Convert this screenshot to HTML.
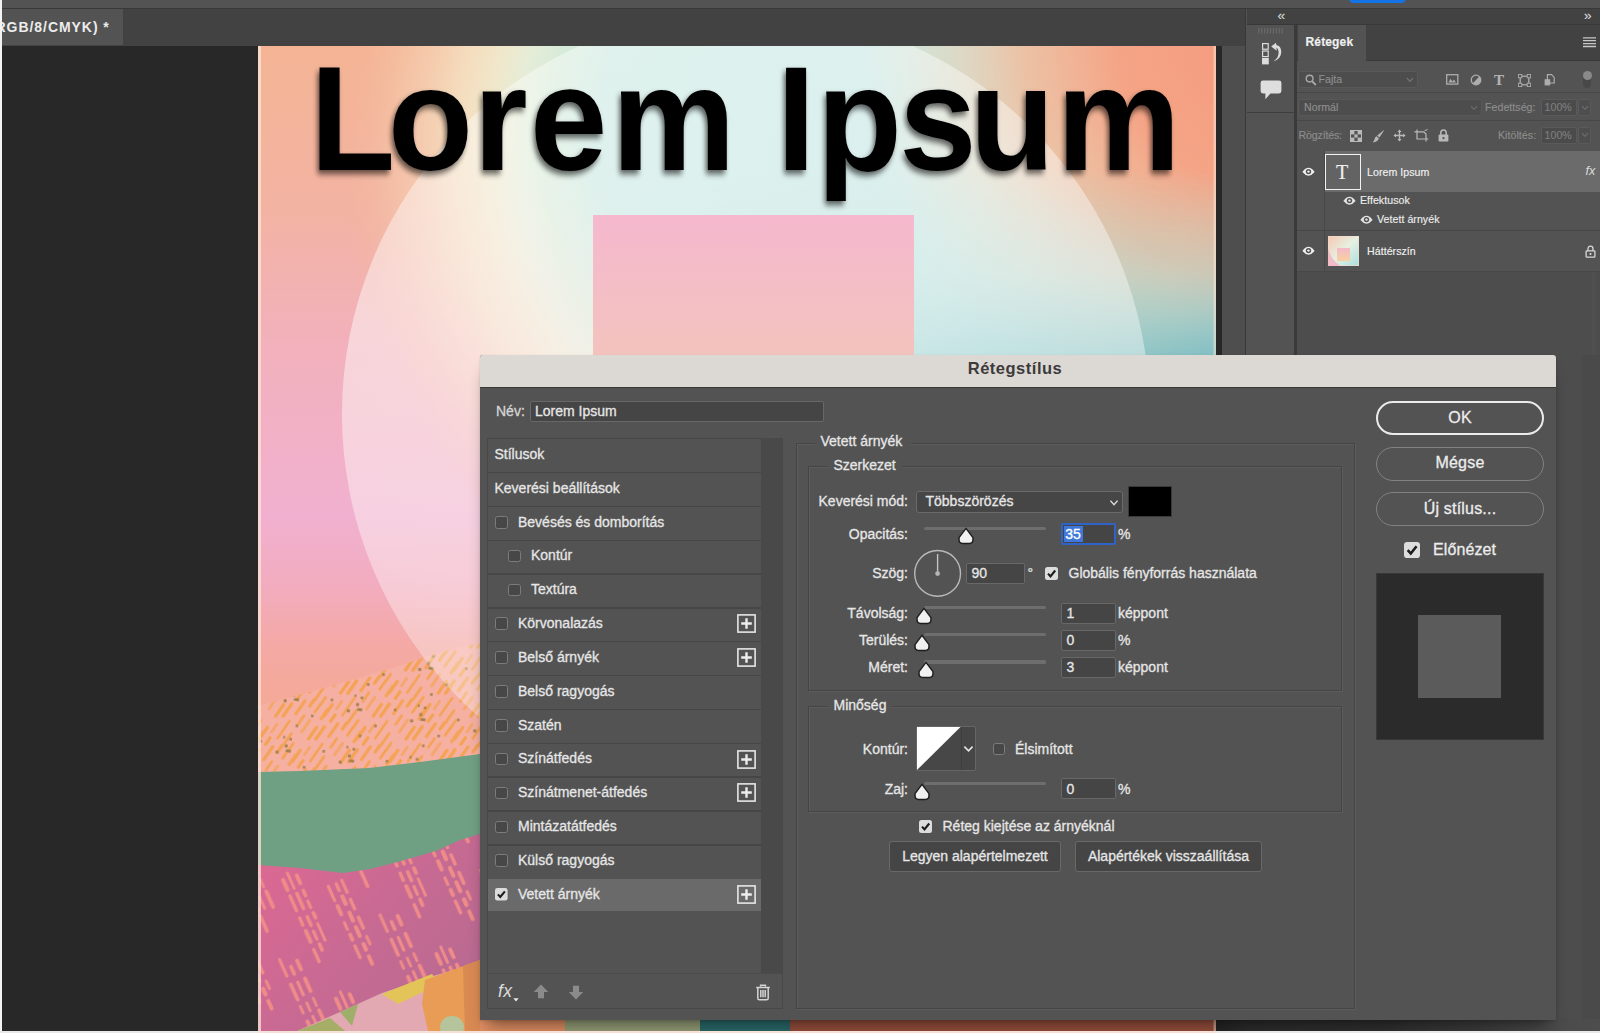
<!DOCTYPE html>
<html lang="hu">
<head>
<meta charset="utf-8">
<title>Rétegstílus</title>
<style>
html,body{margin:0;padding:0;background:#535353;}
body{width:1600px;height:1033px;overflow:hidden;font-family:"Liberation Sans",sans-serif;}
#root{position:relative;width:1600px;height:1033px;overflow:hidden;background:#535353;}
#root div,#root span,#root svg{position:absolute;box-sizing:border-box;}
.t{white-space:nowrap;color:#e6e6e6;font-size:14px;line-height:16px;letter-spacing:0;-webkit-text-stroke:0.3px currentColor;}
.r{text-align:right;}
.p{white-space:nowrap;font-size:10.6px;line-height:14px;color:#ddd;letter-spacing:0.05px;-webkit-text-stroke:0.15px currentColor;}
/* ---- app chrome ---- */
#topbar{left:0;top:0;width:1600px;height:8px;background:#535353;}
#topline{left:0;top:8px;width:1600px;height:1px;background:#383838;}
#tabbar{left:0;top:9px;width:1246px;height:37px;background:#424242;}
#doctab{left:0;top:9px;width:123px;height:36px;background:#535353;}
#doctabtxt{left:-4.5px;top:19.3px;font-weight:bold;font-size:14px;color:#ececec;letter-spacing:0.95px;-webkit-text-stroke:0;}
#work{left:0;top:46px;width:1222px;height:987px;background:#282828;}
#leftedge{left:0;top:0;width:2.2px;height:1033px;background:#f4f4f4;}
#botedge{left:0;top:1031px;width:1600px;height:2px;background:#e9e9e9;}
#vscroll{left:1222px;top:46px;width:23px;height:987px;background:#4e4e4e;}
#vline1{left:1245px;top:9px;width:1px;height:1024px;background:#383838;}
#dock{left:1246px;top:9px;width:49px;height:1024px;background:#535353;}
#vline2{left:1294.4px;top:9px;width:2.2px;height:1024px;background:#383838;}
#panel{left:1296.6px;top:9px;width:304px;height:1024px;background:#4d4d4d;}
</style>
</head>
<body>
<div id="root">
  <div id="topbar"></div>
  <div id="topline"></div>
  <div id="tabbar"></div>
  <div id="doctab"></div>
  <div id="doctabtxt" class="t">RGB/8/CMYK) *</div>
  <div id="work"></div>
  <!--CANVAS-->
  <svg id="cv" style="left:258px;top:46px" width="958" height="985" viewBox="258 46 958 985">
    <defs>
      <linearGradient id="gL" x1="0" y1="46" x2="0" y2="1031" gradientUnits="userSpaceOnUse">
        <stop offset="0" stop-color="#f4b494"/>
        <stop offset="0.16" stop-color="#f3b3a2"/>
        <stop offset="0.30" stop-color="#f2b1bb"/>
        <stop offset="0.48" stop-color="#f1b0cf"/>
        <stop offset="0.55" stop-color="#f2acbe"/>
        <stop offset="0.61" stop-color="#f4a9a4"/>
        <stop offset="0.67" stop-color="#f5a997"/>
        <stop offset="1" stop-color="#f5a997"/>
      </linearGradient>
      <radialGradient id="gC" cx="860" cy="150" r="520" gradientUnits="userSpaceOnUse">
        <stop offset="0" stop-color="#c2e6e3"/>
        <stop offset="0.50" stop-color="#c8e8e1"/>
        <stop offset="0.60" stop-color="#d6ebd9"/>
        <stop offset="0.66" stop-color="#e5eed9" stop-opacity="0.98"/>
        <stop offset="0.72" stop-color="#f1e9cc" stop-opacity="0.95"/>
        <stop offset="0.78" stop-color="#f5e1c2" stop-opacity="0.88"/>
        <stop offset="0.88" stop-color="#f6d0b2" stop-opacity="0.55"/>
        <stop offset="1" stop-color="#f4b494" stop-opacity="0"/>
      </radialGradient>
      <radialGradient id="gTR" cx="1260" cy="40" r="475" gradientUnits="userSpaceOnUse">
        <stop offset="0" stop-color="#f59a7e"/>
        <stop offset="0.3" stop-color="#f5a486"/>
        <stop offset="0.5" stop-color="#f5b896" stop-opacity="0.8"/>
        <stop offset="0.68" stop-color="#f2d0b0" stop-opacity="0.4"/>
        <stop offset="0.85" stop-color="#f0dcc0" stop-opacity="0"/>
        <stop offset="1" stop-color="#f0dcc0" stop-opacity="0"/>
      </radialGradient>
      <linearGradient id="gTeal" x1="0" y1="170" x2="0" y2="375" gradientUnits="userSpaceOnUse">
        <stop offset="0" stop-color="#9ccfd0" stop-opacity="0"/>
        <stop offset="0.5" stop-color="#9ccfd0" stop-opacity="0.45"/>
        <stop offset="0.8" stop-color="#84c3c8" stop-opacity="0.85"/>
        <stop offset="1" stop-color="#6fb7c0" stop-opacity="1"/>
      </linearGradient>
      <linearGradient id="gTealM" x1="600" y1="0" x2="1216" y2="0" gradientUnits="userSpaceOnUse">
        <stop offset="0" stop-color="#fff" stop-opacity="0"/>
        <stop offset="0.5" stop-color="#fff" stop-opacity="0.45"/>
        <stop offset="1" stop-color="#fff" stop-opacity="1"/>
      </linearGradient>
      <radialGradient id="gPW" cx="470" cy="420" r="270" gradientUnits="userSpaceOnUse">
        <stop offset="0" stop-color="#fbe3e8" stop-opacity="0.3"/>
        <stop offset="0.55" stop-color="#fbe6e6" stop-opacity="0.22"/>
        <stop offset="1" stop-color="#fbe6e6" stop-opacity="0"/>
      </radialGradient>
      <clipPath id="cCirc"><circle cx="746" cy="414" r="404"/></clipPath>
      <mask id="mTeal"><rect x="258" y="46" width="958" height="985" fill="url(#gTealM)"/></mask>
      <linearGradient id="gPink" x1="0" y1="215" x2="0" y2="420" gradientUnits="userSpaceOnUse">
        <stop offset="0" stop-color="#f5b8ce"/>
        <stop offset="1" stop-color="#f2c8b6"/>
      </linearGradient>
      <linearGradient id="gCirc" x1="0" y1="10" x2="0" y2="818" gradientUnits="userSpaceOnUse">
        <stop offset="0" stop-color="#fff" stop-opacity="0.42"/>
        <stop offset="0.4" stop-color="#fff" stop-opacity="0.4"/>
        <stop offset="0.6" stop-color="#fff" stop-opacity="0.34"/>
        <stop offset="0.8" stop-color="#fff" stop-opacity="0.3"/>
        <stop offset="1" stop-color="#fff" stop-opacity="0.3"/>
      </linearGradient>
      <linearGradient id="gMag" x1="258" y1="840" x2="480" y2="1031" gradientUnits="userSpaceOnUse">
        <stop offset="0" stop-color="#de6893"/>
        <stop offset="0.5" stop-color="#c76a93"/>
        <stop offset="1" stop-color="#b46a90"/>
      </linearGradient>
      <pattern id="pHatch" width="40" height="56" patternUnits="userSpaceOnUse" patternTransform="rotate(35)">
        <rect x="2.8" y="-2.1" width="3.3" height="13.0" rx="1.6" fill="#f4a356" opacity="1"/>
        <rect x="0.9" y="15.5" width="3.5" height="18.6" rx="1.8" fill="#f4a356" opacity="1"/>
        <rect x="0.9" y="41.1" width="2.7" height="11.9" rx="1.3" fill="#f4a356" opacity="0.75"/>
        <rect x="10.2" y="5.4" width="3.2" height="19.2" rx="1.6" fill="#f4a356" opacity="1"/>
        <rect x="9.5" y="31.3" width="2.6" height="23.7" rx="1.3" fill="#f4a356" opacity="1"/>
        <rect x="17.0" y="-4.6" width="3.4" height="15.0" rx="1.7" fill="#f4a356" opacity="1"/>
        <rect x="18.2" y="18.4" width="2.7" height="13.4" rx="1.3" fill="#f4a356" opacity="1"/>
        <rect x="17.9" y="40.2" width="3.1" height="17.5" rx="1.6" fill="#f4a356" opacity="0.9"/>
        <rect x="17.9" y="-15.8" width="3.1" height="17.5" rx="1.6" fill="#f4a356" opacity="0.9"/>
        <rect x="25.0" y="-1.7" width="2.8" height="14.2" rx="1.4" fill="#f4a356" opacity="1"/>
        <rect x="25.5" y="18.7" width="2.9" height="17.4" rx="1.5" fill="#f4a356" opacity="0.75"/>
        <rect x="25.2" y="47.0" width="3.0" height="12.5" rx="1.5" fill="#f4a356" opacity="0.9"/>
        <rect x="25.2" y="-9.0" width="3.0" height="12.5" rx="1.5" fill="#f4a356" opacity="0.9"/>
        <rect x="33.6" y="-5.5" width="3.4" height="19.7" rx="1.7" fill="#f4a356" opacity="0.9"/>
        <rect x="34.8" y="20.6" width="3.4" height="17.5" rx="1.7" fill="#f4a356" opacity="1"/>
        <rect x="34.6" y="48.7" width="3.3" height="17.2" rx="1.6" fill="#f4a356" opacity="1"/>
        <rect x="34.6" y="-7.3" width="3.3" height="17.2" rx="1.6" fill="#f4a356" opacity="1"/>
      </pattern>
      <pattern id="pDots" width="64" height="52" patternUnits="userSpaceOnUse" patternTransform="rotate(9)">
        <rect x="35.1" y="33.0" width="2.6" height="2.6" fill="#a8824e"/>
        <rect x="17.8" y="19.1" width="3" height="3" fill="#a8824e"/>
        <rect x="21.5" y="45.2" width="2.6" height="2.6" fill="#a8824e"/>
        <rect x="10.9" y="6.5" width="2.2" height="2.2" fill="#a8824e"/>
        <rect x="13.9" y="14.5" width="3" height="3" fill="#a8824e"/>
        <rect x="15.6" y="19.4" width="2.6" height="2.6" fill="#a8824e"/>
        <rect x="5.8" y="22.1" width="3" height="3" fill="#a8824e"/>
        <rect x="17.4" y="7.4" width="2.6" height="2.6" fill="#a8824e"/>
        <rect x="52.0" y="14.1" width="2.6" height="2.6" fill="#a8824e"/>
      </pattern>
      <pattern id="pRain" width="110" height="130" patternUnits="userSpaceOnUse" patternTransform="rotate(-24)">
        <rect x="8.7" y="7.1" width="4.0" height="14.9" rx="2.0" fill="#ef8b88"/>
        <rect x="8.7" y="-122.9" width="4.0" height="14.9" rx="2.0" fill="#ef8b88"/>
        <rect x="8.7" y="137.1" width="4.0" height="14.9" rx="2.0" fill="#ef8b88"/>
        <rect x="8.7" y="24.8" width="3.5" height="19.5" rx="1.7" fill="#ef8b88"/>
        <rect x="8.7" y="-105.2" width="3.5" height="19.5" rx="1.7" fill="#ef8b88"/>
        <rect x="8.7" y="154.8" width="3.5" height="19.5" rx="1.7" fill="#ef8b88"/>
        <rect x="8.7" y="48.7" width="3.4" height="11.4" rx="1.7" fill="#ef8b88"/>
        <rect x="8.7" y="-81.3" width="3.4" height="11.4" rx="1.7" fill="#ef8b88"/>
        <rect x="8.7" y="178.7" width="3.4" height="11.4" rx="1.7" fill="#ef8b88"/>
        <rect x="8.7" y="62.7" width="4.0" height="16.0" rx="2.0" fill="#ef8b88"/>
        <rect x="8.7" y="-67.3" width="4.0" height="16.0" rx="2.0" fill="#ef8b88"/>
        <rect x="8.7" y="192.7" width="4.0" height="16.0" rx="2.0" fill="#ef8b88"/>
        <rect x="8.7" y="83.2" width="3.4" height="16.7" rx="1.7" fill="#ef8b88"/>
        <rect x="8.7" y="-46.8" width="3.4" height="16.7" rx="1.7" fill="#ef8b88"/>
        <rect x="8.7" y="213.2" width="3.4" height="16.7" rx="1.7" fill="#ef8b88"/>
        <rect x="16.0" y="3.0" width="2.9" height="19.8" rx="1.4" fill="#ef8b88"/>
        <rect x="16.0" y="-127.0" width="2.9" height="19.8" rx="1.4" fill="#ef8b88"/>
        <rect x="16.0" y="133.0" width="2.9" height="19.8" rx="1.4" fill="#ef8b88"/>
        <rect x="16.0" y="25.0" width="3.6" height="20.4" rx="1.8" fill="#ef8b88"/>
        <rect x="16.0" y="-105.0" width="3.6" height="20.4" rx="1.8" fill="#ef8b88"/>
        <rect x="16.0" y="155.0" width="3.6" height="20.4" rx="1.8" fill="#ef8b88"/>
        <rect x="16.0" y="50.5" width="3.6" height="13.2" rx="1.8" fill="#ef8b88"/>
        <rect x="16.0" y="-79.5" width="3.6" height="13.2" rx="1.8" fill="#ef8b88"/>
        <rect x="16.0" y="180.5" width="3.6" height="13.2" rx="1.8" fill="#ef8b88"/>
        <rect x="16.0" y="66.5" width="3.2" height="12.0" rx="1.6" fill="#ef8b88"/>
        <rect x="16.0" y="-63.5" width="3.2" height="12.0" rx="1.6" fill="#ef8b88"/>
        <rect x="16.0" y="196.5" width="3.2" height="12.0" rx="1.6" fill="#ef8b88"/>
        <rect x="16.0" y="80.6" width="3.7" height="10.1" rx="1.9" fill="#ef8b88"/>
        <rect x="16.0" y="-49.4" width="3.7" height="10.1" rx="1.9" fill="#ef8b88"/>
        <rect x="16.0" y="210.6" width="3.7" height="10.1" rx="1.9" fill="#ef8b88"/>
        <rect x="23.1" y="8.6" width="3.9" height="12.3" rx="1.9" fill="#ef8b88"/>
        <rect x="23.1" y="-121.4" width="3.9" height="12.3" rx="1.9" fill="#ef8b88"/>
        <rect x="23.1" y="138.6" width="3.9" height="12.3" rx="1.9" fill="#ef8b88"/>
        <rect x="23.1" y="25.0" width="3.6" height="9.4" rx="1.8" fill="#ef8b88"/>
        <rect x="23.1" y="-105.0" width="3.6" height="9.4" rx="1.8" fill="#ef8b88"/>
        <rect x="23.1" y="155.0" width="3.6" height="9.4" rx="1.8" fill="#ef8b88"/>
        <rect x="23.1" y="36.8" width="3.2" height="10.4" rx="1.6" fill="#ef8b88"/>
        <rect x="23.1" y="-93.2" width="3.2" height="10.4" rx="1.6" fill="#ef8b88"/>
        <rect x="23.1" y="166.8" width="3.2" height="10.4" rx="1.6" fill="#ef8b88"/>
        <rect x="23.1" y="49.5" width="3.8" height="9.2" rx="1.9" fill="#ef8b88"/>
        <rect x="23.1" y="-80.5" width="3.8" height="9.2" rx="1.9" fill="#ef8b88"/>
        <rect x="23.1" y="179.5" width="3.8" height="9.2" rx="1.9" fill="#ef8b88"/>
        <rect x="23.1" y="61.5" width="2.9" height="21.1" rx="1.4" fill="#ef8b88"/>
        <rect x="23.1" y="-68.5" width="2.9" height="21.1" rx="1.4" fill="#ef8b88"/>
        <rect x="23.1" y="191.5" width="2.9" height="21.1" rx="1.4" fill="#ef8b88"/>
        <rect x="47.8" y="31.5" width="3.2" height="19.1" rx="1.6" fill="#ef8b88"/>
        <rect x="47.8" y="-98.5" width="3.2" height="19.1" rx="1.6" fill="#ef8b88"/>
        <rect x="47.8" y="161.5" width="3.2" height="19.1" rx="1.6" fill="#ef8b88"/>
        <rect x="47.8" y="52.9" width="4.1" height="13.3" rx="2.1" fill="#ef8b88"/>
        <rect x="47.8" y="-77.1" width="4.1" height="13.3" rx="2.1" fill="#ef8b88"/>
        <rect x="47.8" y="182.9" width="4.1" height="13.3" rx="2.1" fill="#ef8b88"/>
        <rect x="47.8" y="71.3" width="3.1" height="10.5" rx="1.6" fill="#ef8b88"/>
        <rect x="47.8" y="-58.7" width="3.1" height="10.5" rx="1.6" fill="#ef8b88"/>
        <rect x="47.8" y="201.3" width="3.1" height="10.5" rx="1.6" fill="#ef8b88"/>
        <rect x="47.8" y="84.2" width="3.9" height="9.8" rx="2.0" fill="#ef8b88"/>
        <rect x="47.8" y="-45.8" width="3.9" height="9.8" rx="2.0" fill="#ef8b88"/>
        <rect x="47.8" y="214.2" width="3.9" height="9.8" rx="2.0" fill="#ef8b88"/>
        <rect x="47.8" y="96.7" width="3.4" height="16.3" rx="1.7" fill="#ef8b88"/>
        <rect x="47.8" y="-33.3" width="3.4" height="16.3" rx="1.7" fill="#ef8b88"/>
        <rect x="47.8" y="226.7" width="3.4" height="16.3" rx="1.7" fill="#ef8b88"/>
        <rect x="56.0" y="32.6" width="3.4" height="10.5" rx="1.7" fill="#ef8b88"/>
        <rect x="56.0" y="-97.4" width="3.4" height="10.5" rx="1.7" fill="#ef8b88"/>
        <rect x="56.0" y="162.6" width="3.4" height="10.5" rx="1.7" fill="#ef8b88"/>
        <rect x="56.0" y="46.0" width="4.2" height="12.5" rx="2.1" fill="#ef8b88"/>
        <rect x="56.0" y="-84.0" width="4.2" height="12.5" rx="2.1" fill="#ef8b88"/>
        <rect x="56.0" y="176.0" width="4.2" height="12.5" rx="2.1" fill="#ef8b88"/>
        <rect x="56.0" y="63.7" width="4.0" height="13.0" rx="2.0" fill="#ef8b88"/>
        <rect x="56.0" y="-66.3" width="4.0" height="13.0" rx="2.0" fill="#ef8b88"/>
        <rect x="56.0" y="193.7" width="4.0" height="13.0" rx="2.0" fill="#ef8b88"/>
        <rect x="56.0" y="79.5" width="4.0" height="14.1" rx="2.0" fill="#ef8b88"/>
        <rect x="56.0" y="-50.5" width="4.0" height="14.1" rx="2.0" fill="#ef8b88"/>
        <rect x="56.0" y="209.5" width="4.0" height="14.1" rx="2.0" fill="#ef8b88"/>
        <rect x="56.0" y="98.2" width="4.2" height="10.3" rx="2.1" fill="#ef8b88"/>
        <rect x="56.0" y="-31.8" width="4.2" height="10.3" rx="2.1" fill="#ef8b88"/>
        <rect x="56.0" y="228.2" width="4.2" height="10.3" rx="2.1" fill="#ef8b88"/>
        <rect x="56.0" y="111.4" width="3.9" height="12.4" rx="1.9" fill="#ef8b88"/>
        <rect x="56.0" y="-18.6" width="3.9" height="12.4" rx="1.9" fill="#ef8b88"/>
        <rect x="56.0" y="241.4" width="3.9" height="12.4" rx="1.9" fill="#ef8b88"/>
        <rect x="62.6" y="31.5" width="3.1" height="16.6" rx="1.6" fill="#ef8b88"/>
        <rect x="62.6" y="-98.5" width="3.1" height="16.6" rx="1.6" fill="#ef8b88"/>
        <rect x="62.6" y="161.5" width="3.1" height="16.6" rx="1.6" fill="#ef8b88"/>
        <rect x="62.6" y="52.4" width="3.4" height="13.8" rx="1.7" fill="#ef8b88"/>
        <rect x="62.6" y="-77.6" width="3.4" height="13.8" rx="1.7" fill="#ef8b88"/>
        <rect x="62.6" y="182.4" width="3.4" height="13.8" rx="1.7" fill="#ef8b88"/>
        <rect x="62.6" y="72.1" width="3.6" height="15.3" rx="1.8" fill="#ef8b88"/>
        <rect x="62.6" y="-57.9" width="3.6" height="15.3" rx="1.8" fill="#ef8b88"/>
        <rect x="62.6" y="202.1" width="3.6" height="15.3" rx="1.8" fill="#ef8b88"/>
        <rect x="62.6" y="92.9" width="3.0" height="11.4" rx="1.5" fill="#ef8b88"/>
        <rect x="62.6" y="-37.1" width="3.0" height="11.4" rx="1.5" fill="#ef8b88"/>
        <rect x="62.6" y="222.9" width="3.0" height="11.4" rx="1.5" fill="#ef8b88"/>
        <rect x="83.5" y="78.8" width="3.1" height="21.2" rx="1.5" fill="#ef8b88"/>
        <rect x="83.5" y="-51.2" width="3.1" height="21.2" rx="1.5" fill="#ef8b88"/>
        <rect x="83.5" y="208.8" width="3.1" height="21.2" rx="1.5" fill="#ef8b88"/>
        <rect x="83.5" y="105.8" width="3.6" height="20.5" rx="1.8" fill="#ef8b88"/>
        <rect x="83.5" y="-24.2" width="3.6" height="20.5" rx="1.8" fill="#ef8b88"/>
        <rect x="83.5" y="235.8" width="3.6" height="20.5" rx="1.8" fill="#ef8b88"/>
        <rect x="83.5" y="130.0" width="2.9" height="10.3" rx="1.4" fill="#ef8b88"/>
        <rect x="83.5" y="-0.0" width="2.9" height="10.3" rx="1.4" fill="#ef8b88"/>
        <rect x="83.5" y="260.0" width="2.9" height="10.3" rx="1.4" fill="#ef8b88"/>
        <rect x="83.5" y="146.2" width="3.8" height="12.1" rx="1.9" fill="#ef8b88"/>
        <rect x="83.5" y="16.2" width="3.8" height="12.1" rx="1.9" fill="#ef8b88"/>
        <rect x="83.5" y="276.2" width="3.8" height="12.1" rx="1.9" fill="#ef8b88"/>
        <rect x="83.5" y="161.3" width="3.6" height="19.7" rx="1.8" fill="#ef8b88"/>
        <rect x="83.5" y="31.3" width="3.6" height="19.7" rx="1.8" fill="#ef8b88"/>
        <rect x="83.5" y="291.3" width="3.6" height="19.7" rx="1.8" fill="#ef8b88"/>
        <rect x="90.9" y="89.4" width="3.6" height="12.0" rx="1.8" fill="#ef8b88"/>
        <rect x="90.9" y="-40.6" width="3.6" height="12.0" rx="1.8" fill="#ef8b88"/>
        <rect x="90.9" y="219.4" width="3.6" height="12.0" rx="1.8" fill="#ef8b88"/>
        <rect x="90.9" y="106.8" width="3.2" height="17.0" rx="1.6" fill="#ef8b88"/>
        <rect x="90.9" y="-23.2" width="3.2" height="17.0" rx="1.6" fill="#ef8b88"/>
        <rect x="90.9" y="236.8" width="3.2" height="17.0" rx="1.6" fill="#ef8b88"/>
        <rect x="90.9" y="129.4" width="2.8" height="11.7" rx="1.4" fill="#ef8b88"/>
        <rect x="90.9" y="-0.6" width="2.8" height="11.7" rx="1.4" fill="#ef8b88"/>
        <rect x="90.9" y="259.4" width="2.8" height="11.7" rx="1.4" fill="#ef8b88"/>
        <rect x="90.9" y="144.2" width="2.9" height="14.8" rx="1.4" fill="#ef8b88"/>
        <rect x="90.9" y="14.2" width="2.9" height="14.8" rx="1.4" fill="#ef8b88"/>
        <rect x="90.9" y="274.2" width="2.9" height="14.8" rx="1.4" fill="#ef8b88"/>
        <rect x="98.7" y="86.4" width="4.0" height="13.7" rx="2.0" fill="#ef8b88"/>
        <rect x="98.7" y="-43.6" width="4.0" height="13.7" rx="2.0" fill="#ef8b88"/>
        <rect x="98.7" y="216.4" width="4.0" height="13.7" rx="2.0" fill="#ef8b88"/>
        <rect x="98.7" y="106.1" width="3.8" height="17.5" rx="1.9" fill="#ef8b88"/>
        <rect x="98.7" y="-23.9" width="3.8" height="17.5" rx="1.9" fill="#ef8b88"/>
        <rect x="98.7" y="236.1" width="3.8" height="17.5" rx="1.9" fill="#ef8b88"/>
        <rect x="98.7" y="128.0" width="2.8" height="10.8" rx="1.4" fill="#ef8b88"/>
        <rect x="98.7" y="-2.0" width="2.8" height="10.8" rx="1.4" fill="#ef8b88"/>
        <rect x="98.7" y="258.0" width="2.8" height="10.8" rx="1.4" fill="#ef8b88"/>
        <rect x="98.7" y="140.8" width="3.8" height="20.8" rx="1.9" fill="#ef8b88"/>
        <rect x="98.7" y="10.8" width="3.8" height="20.8" rx="1.9" fill="#ef8b88"/>
        <rect x="98.7" y="270.8" width="3.8" height="20.8" rx="1.9" fill="#ef8b88"/>
      </pattern>
      <filter id="fBlur" x="-5%" y="-5%" width="110%" height="110%"><feGaussianBlur stdDeviation="0.6"/></filter>
      <filter id="fDrop" x="-3%" y="-15%" width="106%" height="140%"><feGaussianBlur in="SourceAlpha" stdDeviation="3"/><feOffset dx="-2.5" dy="3.5"/><feComponentTransfer><feFuncA type="linear" slope="0.62"/></feComponentTransfer><feMerge><feMergeNode/><feMergeNode in="SourceGraphic"/></feMerge></filter>
    </defs>
    <rect x="258" y="46" width="958" height="985" fill="url(#gL)"/>
    <rect x="258" y="46" width="958" height="700" fill="url(#gC)"/>
    <rect x="258" y="46" width="958" height="500" fill="url(#gTR)"/>
    <rect x="258" y="46" width="958" height="700" fill="url(#gTeal)" mask="url(#mTeal)"/>
    <!-- landscape -->
    <g filter="url(#fBlur)">
      <path id="hb" d="M258,706 L262,705 L324,688 L399,666 L440,652 L480,643 L1216,560 L1216,800 L258,800 Z" fill="#f6b4a6" opacity="0.7"/>
      <path d="M258,706 L262,705 L324,688 L399,666 L440,652 L480,643 L1216,560 L1216,800 L258,800 Z" fill="url(#pHatch)"/>
      <path d="M258,706 L262,705 L324,688 L399,666 L440,652 L480,643 L1216,560 L1216,800 L258,800 Z" fill="url(#pDots)"/>
    </g>
    <circle cx="746" cy="414" r="404" fill="url(#gCirc)"/>
    <rect x="258" y="46" width="500" height="700" fill="url(#gPW)" clip-path="url(#cCirc)"/>
    <rect x="593" y="215" width="321" height="300" fill="url(#gPink)"/>
    <g filter="url(#fBlur)">
      <path d="M258,772 L300,771 L369,768 L420,762 L480,754 L1216,700 L1216,900 L258,900 Z" fill="#6fa084"/>
      <path d="M258,865 L300,868 L343,873 L370,869 L394,863 L436,851 L460,840 L480,834 L1216,800 L1216,1031 L258,1031 Z" fill="url(#gMag)"/>
      <path d="M258,865 L300,868 L343,873 L370,869 L394,863 L436,851 L460,840 L480,834 L1216,800 L1216,1031 L258,1031 Z" fill="url(#pRain)"/>
      <path d="M297,1031 L340,1012 L382,993 L430,977 L480,962 L1216,962 L1216,1031 Z" fill="#e3a9b2"/>
      <path d="M382,994 L432,974 L440,984 L398,1004 Z" fill="#e3c458"/>
      <path d="M425,980 L480,960 L480,1031 L428,1031 L422,1004 Z" fill="#e89c55"/>
      <path d="M463,966 L480,960 L480,1031 L465,1031 Z" fill="#d98a52"/>
      <ellipse cx="452" cy="1027" rx="12" ry="11" fill="#b5c49a"/>
      <path d="M340,1012 L358,1004 L352,1026 Z" fill="#9fae68"/>
      <path d="M297,1031 L330,1018 L345,1031 Z" fill="#a6ad66"/>
      <rect x="480" y="1010" width="90" height="21" fill="#e08e62"/>
      <rect x="565" y="1010" width="140" height="21" fill="#969f78"/>
      <rect x="700" y="1010" width="92" height="21" fill="#2b6b6b"/>
      <rect x="790" y="1010" width="426" height="21" fill="#97503c"/>
    </g>
    <rect x="258" y="46" width="3" height="985" fill="#fbe6d8" opacity="0.75"/>
    <rect x="1213.5" y="46" width="2.5" height="985" fill="#fbe6d8" opacity="0.5"/>
    <!-- text -->
    <text id="lorem" transform="scale(0.935 1)" x="331.7 415.0 506.3 566.8 654.4 796.8 830.8 873.8 961.7 1037.1 1130.1" y="170.0" font-family="'Liberation Sans',sans-serif" font-weight="bold" font-size="148.8" fill="#050102" filter="url(#fDrop)">Lorem Ipsum</text>
  </svg>
  <!--/CANVAS-->
  <div id="vscroll"></div>
  <div id="vline1"></div>
  <div id="dock"></div>
  <div id="vline2"></div>
  <div id="panel"></div>
  <!--PANELS-->
  <div style="left:1349px;top:-6px;width:57px;height:8.6px;background:#1473e6;border-radius:5px;"></div>
  <div style="left:1246.5px;top:9px;width:353.5px;height:15px;background:#424242;"></div>
  <div style="left:1246.5px;top:24px;width:353.5px;height:1px;background:#383838;"></div>
  <div class="p" style="left:1277.5px;top:8.5px;font-size:13px;line-height:14px;color:#d8d8d8;letter-spacing:-1px;">&lsaquo;&lsaquo;</div>
  <div class="p" style="left:1584px;top:8.5px;font-size:13px;line-height:14px;color:#d8d8d8;letter-spacing:-1px;">&rsaquo;&rsaquo;</div>
  <div style="left:1247px;top:25px;width:48px;height:1008px;background:#535353;"></div>
  <div style="left:1294.4px;top:25px;width:2.2px;height:1008px;background:#3a3a3a;"></div>
  <div style="left:1247px;top:111.5px;width:48px;height:1px;background:#3e3e3e;"></div>
  <svg style="left:1258px;top:28px" width="26" height="6" viewBox="0 0 26 6"><rect x="0.3" y="0" width="1.2" height="5.6" fill="#6a6a6a"/><rect x="3.1999999999999997" y="0" width="1.2" height="5.6" fill="#6a6a6a"/><rect x="6.1" y="0" width="1.2" height="5.6" fill="#6a6a6a"/><rect x="9.0" y="0" width="1.2" height="5.6" fill="#6a6a6a"/><rect x="11.9" y="0" width="1.2" height="5.6" fill="#6a6a6a"/><rect x="14.8" y="0" width="1.2" height="5.6" fill="#6a6a6a"/><rect x="17.7" y="0" width="1.2" height="5.6" fill="#6a6a6a"/><rect x="20.6" y="0" width="1.2" height="5.6" fill="#6a6a6a"/><rect x="23.5" y="0" width="1.2" height="5.6" fill="#6a6a6a"/></svg>
  <svg style="left:1261px;top:42px" width="21" height="23" viewBox="0 0 21 23"><rect x="1.6" y="1.6" width="5.6" height="5.6" fill="none" stroke="#dcdcdc" stroke-width="1.2"/><rect x="1.6" y="9" width="5.6" height="5.6" fill="none" stroke="#dcdcdc" stroke-width="1.2"/><rect x="1" y="16" width="6.8" height="6.4" fill="#dcdcdc"/><path d="M12.4 19.6 Q18.2 15.6 17.6 9.6 Q17.2 6.4 15.4 5.6 L15.8 8.8 L10.2 4.6 L15 0.8 L15.3 3 Q20 3.8 20.3 9.8 Q20.2 16.8 12.4 19.6 Z" fill="#dcdcdc"/></svg>
  <svg style="left:1260px;top:79.5px" width="22" height="20" viewBox="0 0 22 20"><path d="M3 0.6 H19 Q21.4 0.6 21.4 3 V11 Q21.4 13.4 19 13.4 H10.4 L5.4 19.2 V13.4 H3 Q0.6 13.4 0.6 11 V3 Q0.6 0.6 3 0.6 Z" fill="#dedede"/></svg>
  <div style="left:1296.6px;top:25px;width:303.4px;height:34.5px;background:#424242;"></div>
  <div style="left:1296.6px;top:59.5px;width:303.4px;height:1px;background:#3a3a3a;"></div>
  <div style="left:1298px;top:25px;width:67.6px;height:36px;background:#535353;"></div>
  <div class="p" style="left:1305.5px;top:34.5px;font-weight:bold;font-size:12px;line-height:14px;color:#f0f0f0;letter-spacing:0.15px;">Rétegek</div>
  <svg style="left:1582.5px;top:37px" width="13.5" height="10.5" viewBox="0 0 13.5 10.5"><path d="M0 0.8 H13.5 M0 3.7 H13.5 M0 6.6 H13.5 M0 9.5 H13.5" stroke="#c8c8c8" stroke-width="1.3"/></svg>
  <div style="left:1296.6px;top:60.5px;width:303.4px;height:90px;background:#535353;"></div>
  <div style="left:1296.6px;top:91.5px;width:303.4px;height:1px;background:#484848;"></div>
  <div style="left:1296.6px;top:119.5px;width:303.4px;height:1px;background:#484848;"></div>
  <div style="left:1298px;top:71px;width:119.5px;height:17px;background:#4d4d4d;border:1px solid #595959;border-radius:3px;"></div>
  <svg style="left:1304.5px;top:73.5px" width="12" height="12" viewBox="0 0 12 12"><circle cx="4.6" cy="4.6" r="3.4" fill="none" stroke="#a8a8a8" stroke-width="1.4"/><path d="M7 7.2 L10.8 11" stroke="#a8a8a8" stroke-width="1.9"/></svg>
  <div class="p" style="left:1318.5px;top:72.3px;color:#8e8e8e;">Fajta</div>
  <svg style="left:1406px;top:76.5px" width="8" height="6" viewBox="0 0 8 6"><path d="M1 1.2 L4 4.4 L7 1.2" fill="none" stroke="#777" stroke-width="1.2"/></svg>
  <svg style="left:1446px;top:74px" width="12.5" height="11" viewBox="0 0 12.5 11"><rect x="0.7" y="0.7" width="11.1" height="9.4" fill="none" stroke="#adadad" stroke-width="1.3"/><path d="M2.4 8.4 L4.6 4.8 L6.4 7.4 L8 5.6 L10 8.4 Z" fill="#adadad"/></svg>
  <svg style="left:1470px;top:74px" width="12" height="12" viewBox="0 0 12 12"><circle cx="6" cy="6" r="4.8" fill="none" stroke="#adadad" stroke-width="1.3"/><path d="M9.4 2.6 A4.8 4.8 0 0 1 2.6 9.4 Z" fill="#adadad"/></svg>
  <div class="p" style="left:1494px;top:70.5px;font-family:'Liberation Serif',serif;font-weight:bold;font-size:15px;line-height:18px;color:#b4b4b4;">T</div>
  <svg style="left:1518px;top:73.5px" width="13" height="13" viewBox="0 0 13 13"><rect x="2.2" y="2.2" width="8.6" height="8.6" fill="none" stroke="#adadad" stroke-width="1.3"/><rect x="0.4" y="0.4" width="3.4" height="3.4" fill="#535353" stroke="#adadad" stroke-width="0.9"/><rect x="9.2" y="0.4" width="3.4" height="3.4" fill="#535353" stroke="#adadad" stroke-width="0.9"/><rect x="0.4" y="9.2" width="3.4" height="3.4" fill="#535353" stroke="#adadad" stroke-width="0.9"/><rect x="9.2" y="9.2" width="3.4" height="3.4" fill="#535353" stroke="#adadad" stroke-width="0.9"/></svg>
  <svg style="left:1543.5px;top:73.5px" width="11" height="12" viewBox="0 0 11 12"><path d="M3.4 0.7 H7.6 L10.2 3.4 V9 H3.4 Z" fill="none" stroke="#adadad" stroke-width="1.2"/><rect x="0.6" y="5.2" width="5.6" height="6.2" fill="#adadad"/></svg>
  <div style="left:1583px;top:76px;width:8.4px;height:12px;background:#484848;border-radius:4.2px;"></div>
  <div style="left:1582.6px;top:70.5px;width:9px;height:9px;background:#8a8a8a;border-radius:50%;"></div>
  <div style="left:1298px;top:99px;width:184px;height:17px;background:#4d4d4d;border:1px solid #585858;border-radius:3px;"></div>
  <div class="p" style="left:1304px;top:100.3px;color:#8f8f8f;">Normál</div>
  <svg style="left:1470px;top:104.5px" width="8" height="6" viewBox="0 0 8 6"><path d="M1 1.2 L4 4.4 L7 1.2" fill="none" stroke="#6c6c6c" stroke-width="1.2"/></svg>
  <div class="p" style="left:1485px;top:100.3px;color:#8d8d8d;">Fedettség:</div>
  <div style="left:1541px;top:99px;width:36px;height:17px;background:#4b4b4b;border:1px solid #5a5a5a;border-radius:2px;"></div>
  <div class="p" style="left:1544.5px;top:100.3px;color:#7e7e7e;">100%</div>
  <div style="left:1578px;top:99px;width:13px;height:17px;background:#4e4e4e;border:1px solid #5a5a5a;border-radius:2px;"></div>
  <svg style="left:1580.5px;top:104.5px" width="8" height="6" viewBox="0 0 8 6"><path d="M1 1.2 L4 4.4 L7 1.2" fill="none" stroke="#6c6c6c" stroke-width="1.2"/></svg>
  <div class="p" style="left:1298.5px;top:128px;color:#8d8d8d;letter-spacing:-0.15px;">Rögzítés:</div>
  <svg style="left:1349.5px;top:129.5px" width="12" height="12" viewBox="0 0 12 12"><rect x="0.5" y="0.5" width="11" height="11" fill="none" stroke="#b9b9b9" stroke-width="1"/><rect x="1" y="1" width="3.4" height="3.4" fill="#b9b9b9"/><rect x="7.6" y="1" width="3.4" height="3.4" fill="#b9b9b9"/><rect x="4.4" y="4.4" width="3.2" height="3.2" fill="#b9b9b9"/><rect x="1" y="7.6" width="3.4" height="3.4" fill="#b9b9b9"/><rect x="7.6" y="7.6" width="3.4" height="3.4" fill="#b9b9b9"/></svg>
  <svg style="left:1371.5px;top:128.5px" width="13" height="14" viewBox="0 0 13 14"><path d="M12.6 0.4 L7.4 8.4 L5.2 6.6 Z" fill="#b9b9b9"/><path d="M4.4 7.2 L6.8 9.2 Q6.4 12.6 0.6 13.4 Q2.6 11.6 2.8 9.6 Q3 7.8 4.4 7.2 Z" fill="#b9b9b9"/></svg>
  <svg style="left:1392.5px;top:129px" width="13" height="13" viewBox="0 0 13 13"><path d="M6.5 0.4 L8.6 3 H7.2 V5.8 H10 V4.4 L12.6 6.5 L10 8.6 V7.2 H7.2 V10 H8.6 L6.5 12.6 L4.4 10 H5.8 V7.2 H3 V8.6 L0.4 6.5 L3 4.4 V5.8 H5.8 V3 H4.4 Z" fill="#b9b9b9"/></svg>
  <svg style="left:1413.5px;top:129px" width="15" height="13" viewBox="0 0 15 13"><path d="M3 0.4 V10 H14.4 M0.4 2.8 H9.8 L12 5 V12.6" fill="none" stroke="#b9b9b9" stroke-width="1.2"/><path d="M10.6 1.6 L13.6 0.6" stroke="#b9b9b9" stroke-width="1"/></svg>
  <svg style="left:1437.5px;top:128.5px" width="11" height="13" viewBox="0 0 11 13"><path d="M2.8 6 V3.8 Q2.8 1 5.5 1 Q8.2 1 8.2 3.8 V6" fill="none" stroke="#b9b9b9" stroke-width="1.5"/><rect x="0.6" y="5.6" width="9.8" height="7" rx="0.8" fill="#b9b9b9"/><rect x="4.6" y="8" width="1.8" height="2.2" fill="#535353"/></svg>
  <div class="p" style="left:1498px;top:128px;color:#8d8d8d;">Kitöltés:</div>
  <div style="left:1541px;top:126.5px;width:36px;height:17px;background:#4b4b4b;border:1px solid #5a5a5a;border-radius:2px;"></div>
  <div class="p" style="left:1544.5px;top:128px;color:#7e7e7e;">100%</div>
  <div style="left:1578px;top:126.5px;width:13px;height:17px;background:#4e4e4e;border:1px solid #5a5a5a;border-radius:2px;"></div>
  <svg style="left:1580.5px;top:132px" width="8" height="6" viewBox="0 0 8 6"><path d="M1 1.2 L4 4.4 L7 1.2" fill="none" stroke="#6c6c6c" stroke-width="1.2"/></svg>
  <div style="left:1296.6px;top:150.5px;width:303.4px;height:120.5px;background:#535353;"></div>
  <div style="left:1324.5px;top:150.5px;width:275.5px;height:41.5px;background:#6b6b6b;"></div>
  <div style="left:1323.5px;top:150.5px;width:1px;height:120.5px;background:#474747;"></div>
  <div style="left:1296.6px;top:230.3px;width:303.4px;height:1.2px;background:#474747;"></div>
  <div style="left:1296.6px;top:270.6px;width:303.4px;height:1.2px;background:#484848;"></div>
  <svg style="left:1302px;top:166.5px" width="13" height="10" viewBox="0 0 13 10"><path d="M0.4 5 Q6.5 -3.4 12.6 5 Q6.5 12.4 0.4 5 Z" fill="#f0f0f0"/><circle cx="6.5" cy="4.6" r="2.7" fill="#535353"/><circle cx="6.5" cy="4.6" r="1.2" fill="#f0f0f0"/></svg>
  <svg style="left:1302px;top:245.5px" width="13" height="10" viewBox="0 0 13 10"><path d="M0.4 5 Q6.5 -3.4 12.6 5 Q6.5 12.4 0.4 5 Z" fill="#f0f0f0"/><circle cx="6.5" cy="4.6" r="2.7" fill="#535353"/><circle cx="6.5" cy="4.6" r="1.2" fill="#f0f0f0"/></svg>
  <svg style="left:1343px;top:196px" width="13" height="10" viewBox="0 0 13 10"><path d="M0.4 5 Q6.5 -3.4 12.6 5 Q6.5 12.4 0.4 5 Z" fill="#e4e4e4"/><circle cx="6.5" cy="4.6" r="2.7" fill="#535353"/><circle cx="6.5" cy="4.6" r="1.2" fill="#e4e4e4"/></svg>
  <svg style="left:1360px;top:214.5px" width="13" height="10" viewBox="0 0 13 10"><path d="M0.4 5 Q6.5 -3.4 12.6 5 Q6.5 12.4 0.4 5 Z" fill="#e4e4e4"/><circle cx="6.5" cy="4.6" r="2.7" fill="#535353"/><circle cx="6.5" cy="4.6" r="1.2" fill="#e4e4e4"/></svg>
  <div style="left:1325px;top:154px;width:36px;height:35.5px;background:#636363;border:1.2px solid #f2f2f2;"></div>
  <div class="p" style="left:1336px;top:159.5px;font-family:'Liberation Serif',serif;font-size:20px;line-height:24px;color:#f0f0f0;">T</div>
  <div class="p" style="left:1367px;top:164.8px;color:#f0f0f0;">Lorem Ipsum</div>
  <div class="p" style="left:1585.5px;top:163.5px;font-style:italic;font-size:12.5px;line-height:15px;color:#dcdcdc;-webkit-text-stroke:0;">fx</div>
  <div class="p" style="left:1360px;top:193px;color:#ececec;">Effektusok</div>
  <div class="p" style="left:1377px;top:212px;color:#ececec;">Vetett árnyék</div>
  <svg style="left:1327.5px;top:236px" width="31" height="30" viewBox="0 0 31 30"><defs><linearGradient id="tg" x1="0" y1="0" x2="1" y2="1"><stop offset="0" stop-color="#f6c8b0"/><stop offset="0.5" stop-color="#e6f0e2"/><stop offset="1" stop-color="#a8dfe0"/></linearGradient><linearGradient id="tg2" x1="0" y1="0" x2="0" y2="1"><stop offset="0" stop-color="#f4b8c8"/><stop offset="1" stop-color="#f6d2a0"/></linearGradient></defs><rect width="31" height="30" fill="url(#tg)"/><rect x="0" y="0" width="31" height="30" fill="none" stroke="#f8d8d0" stroke-width="1.5" opacity="0.8"/><path d="M0 30 V12 Q2 22 12 30 Z" fill="#f4b0c0" opacity="0.8"/><rect x="9" y="12" width="13" height="13" fill="url(#tg2)"/></svg>
  <div class="p" style="left:1367px;top:244px;color:#f0f0f0;">Háttérszín</div>
  <svg style="left:1584.5px;top:244.5px" width="11" height="13" viewBox="0 0 11 13"><path d="M3 6 V4 Q3 1.2 5.5 1.2 Q8 1.2 8 4 V6" fill="none" stroke="#d8d8d8" stroke-width="1.3"/><rect x="1.1" y="5.8" width="8.8" height="6.4" rx="0.8" fill="none" stroke="#d8d8d8" stroke-width="1.3"/><rect x="4.7" y="8" width="1.6" height="2" fill="#d8d8d8"/></svg>
  <div style="left:1592px;top:271.5px;width:3px;height:84px;background:#505050;"></div>
  <div style="left:1582px;top:355px;width:18px;height:676px;background:#4a4a4a;"></div>
  <!--/PANELS-->
  <!--DIALOG-->
  <div style="left:1216px;top:1019px;width:384px;height:12.5px;background:linear-gradient(90deg,#242424 0,#2c2c2c 8%,#303030 45%,#3c3c3c 68%,#4a4a4a 86%,#4d4d4d 100%);"></div>
  <div style="left:480px;top:355px;width:1076px;height:664.5px;border-radius:3px 3px 0 0;box-shadow:0 12px 16px -7px rgba(0,0,0,0.45),0 1px 3px rgba(0,0,0,0.12);background:#535353;"></div>
  <div style="left:480px;top:355px;width:1076px;height:32.5px;border-radius:3px 3px 0 0;background:#dcd8d4;"></div>
  <div style="left:480px;top:387px;width:1076px;height:1px;background:#3c3a39;"></div>
  <div class="t" style="left:480px;top:358.2px;width:1070px;text-align:center;font-weight:bold;font-size:16.5px;line-height:20px;color:#3c3b3b;letter-spacing:0.5px;-webkit-text-stroke:0;">Rétegstílus</div>
  <div class="t" style="left:496px;top:402.6px;color:#d6d6d6;">Név:</div>
  <div style="left:530px;top:401px;width:293.5px;height:20.5px;background:#454545;border:1px solid #686868;border-radius:2px;"></div>
  <div class="t" style="left:535px;top:402.6px;">Lorem Ipsum</div>
  <div style="left:487px;top:438px;width:295.5px;height:571px;background:#535353;border:1px solid #484848;border-top:none;"></div>
  <div style="left:761px;top:438px;width:20.5px;height:535px;background:#494949;"></div>
  <div style="left:488px;top:438.0px;width:273px;height:1.4px;background:#464646;"></div>
  <div class="t" style="left:494.5px;top:445.82px;">Stílusok</div>
  <div style="left:488px;top:471.85px;width:273px;height:1.4px;background:#464646;"></div>
  <div class="t" style="left:494.5px;top:479.67px;">Keverési beállítások</div>
  <div style="left:488px;top:505.69px;width:273px;height:1.4px;background:#464646;"></div>
  <div style="left:495.3px;top:515.92px;width:12.6px;height:12.6px;background:#474747;border:1.2px solid #7c7c7c;border-radius:2.6px;"></div>
  <div class="t" style="left:518px;top:513.51px;">Bevésés és domborítás</div>
  <div style="left:488px;top:539.54px;width:273px;height:1.4px;background:#464646;"></div>
  <div style="left:508px;top:549.76px;width:12.6px;height:12.6px;background:#474747;border:1.2px solid #7c7c7c;border-radius:2.6px;"></div>
  <div class="t" style="left:531px;top:547.36px;">Kontúr</div>
  <div style="left:488px;top:573.38px;width:273px;height:1.4px;background:#464646;"></div>
  <div style="left:508px;top:583.61px;width:12.6px;height:12.6px;background:#474747;border:1.2px solid #7c7c7c;border-radius:2.6px;"></div>
  <div class="t" style="left:531px;top:581.21px;">Textúra</div>
  <div style="left:488px;top:607.23px;width:273px;height:1.4px;background:#464646;"></div>
  <div style="left:495.3px;top:617.45px;width:12.6px;height:12.6px;background:#474747;border:1.2px solid #7c7c7c;border-radius:2.6px;"></div>
  <div class="t" style="left:518px;top:615.05px;">Körvonalazás</div>
  <svg style="left:737px;top:614.15px" width="19" height="19" viewBox="0 0 19 19"><rect x="0.9" y="0.9" width="17.2" height="17.2" fill="none" stroke="#e6e6e6" stroke-width="1.6"/><path d="M9.5 4.2 V14.8 M4.2 9.5 H14.8" stroke="#ededed" stroke-width="2.4" fill="none"/></svg>
  <div style="left:488px;top:641.08px;width:273px;height:1.4px;background:#464646;"></div>
  <div style="left:495.3px;top:651.3px;width:12.6px;height:12.6px;background:#474747;border:1.2px solid #7c7c7c;border-radius:2.6px;"></div>
  <div class="t" style="left:518px;top:648.9px;">Belső árnyék</div>
  <svg style="left:737px;top:648.0px" width="19" height="19" viewBox="0 0 19 19"><rect x="0.9" y="0.9" width="17.2" height="17.2" fill="none" stroke="#e6e6e6" stroke-width="1.6"/><path d="M9.5 4.2 V14.8 M4.2 9.5 H14.8" stroke="#ededed" stroke-width="2.4" fill="none"/></svg>
  <div style="left:488px;top:674.92px;width:273px;height:1.4px;background:#464646;"></div>
  <div style="left:495.3px;top:685.15px;width:12.6px;height:12.6px;background:#474747;border:1.2px solid #7c7c7c;border-radius:2.6px;"></div>
  <div class="t" style="left:518px;top:682.75px;">Belső ragyogás</div>
  <div style="left:488px;top:708.77px;width:273px;height:1.4px;background:#464646;"></div>
  <div style="left:495.3px;top:718.99px;width:12.6px;height:12.6px;background:#474747;border:1.2px solid #7c7c7c;border-radius:2.6px;"></div>
  <div class="t" style="left:518px;top:716.59px;">Szatén</div>
  <div style="left:488px;top:742.61px;width:273px;height:1.4px;background:#464646;"></div>
  <div style="left:495.3px;top:752.84px;width:12.6px;height:12.6px;background:#474747;border:1.2px solid #7c7c7c;border-radius:2.6px;"></div>
  <div class="t" style="left:518px;top:750.44px;">Színátfedés</div>
  <svg style="left:737px;top:749.54px" width="19" height="19" viewBox="0 0 19 19"><rect x="0.9" y="0.9" width="17.2" height="17.2" fill="none" stroke="#e6e6e6" stroke-width="1.6"/><path d="M9.5 4.2 V14.8 M4.2 9.5 H14.8" stroke="#ededed" stroke-width="2.4" fill="none"/></svg>
  <div style="left:488px;top:776.46px;width:273px;height:1.4px;background:#464646;"></div>
  <div style="left:495.3px;top:786.68px;width:12.6px;height:12.6px;background:#474747;border:1.2px solid #7c7c7c;border-radius:2.6px;"></div>
  <div class="t" style="left:518px;top:784.28px;">Színátmenet-átfedés</div>
  <svg style="left:737px;top:783.38px" width="19" height="19" viewBox="0 0 19 19"><rect x="0.9" y="0.9" width="17.2" height="17.2" fill="none" stroke="#e6e6e6" stroke-width="1.6"/><path d="M9.5 4.2 V14.8 M4.2 9.5 H14.8" stroke="#ededed" stroke-width="2.4" fill="none"/></svg>
  <div style="left:488px;top:810.31px;width:273px;height:1.4px;background:#464646;"></div>
  <div style="left:495.3px;top:820.53px;width:12.6px;height:12.6px;background:#474747;border:1.2px solid #7c7c7c;border-radius:2.6px;"></div>
  <div class="t" style="left:518px;top:818.13px;">Mintázatátfedés</div>
  <div style="left:488px;top:844.15px;width:273px;height:1.4px;background:#464646;"></div>
  <div style="left:495.3px;top:854.38px;width:12.6px;height:12.6px;background:#474747;border:1.2px solid #7c7c7c;border-radius:2.6px;"></div>
  <div class="t" style="left:518px;top:851.97px;">Külső ragyogás</div>
  <div style="left:488px;top:879.0px;width:273px;height:32.25px;background:#6a6a6a;"></div>
  <svg style="left:495.3px;top:888.22px" width="12.6" height="12.6" viewBox="0 0 12.6 12.6"><rect x="0" y="0" width="12.6" height="12.6" rx="2.4" fill="#dcdcdc"/><path d="M2.9 6.4 L5.3 9 L9.9 3.4" fill="none" stroke="#1c1c1c" stroke-width="2.1"/></svg>
  <div class="t" style="left:518px;top:885.82px;">Vetett árnyék</div>
  <svg style="left:737px;top:884.92px" width="19" height="19" viewBox="0 0 19 19"><rect x="0.9" y="0.9" width="17.2" height="17.2" fill="none" stroke="#e6e6e6" stroke-width="1.6"/><path d="M9.5 4.2 V14.8 M4.2 9.5 H14.8" stroke="#ededed" stroke-width="2.4" fill="none"/></svg>
  <div style="left:488px;top:973.2px;width:293.5px;height:1.2px;background:#4b4b4b;"></div>
  <div class="t" style="left:498px;top:980.5px;font-style:italic;font-size:17.5px;line-height:20px;color:#dcdcdc;letter-spacing:0.3px;-webkit-text-stroke:0;">fx</div>
  <svg style="left:513px;top:998px" width="6" height="4" viewBox="0 0 6 4"><path d="M0.3 0.3 H5.7 L3 3.6 Z" fill="#e8e8e8"/></svg>
  <svg style="left:532.5px;top:984px" width="16" height="15" viewBox="0 0 16 15"><path d="M8 0.6 L15.2 8 H11 V14.2 H5 V8 H0.8 Z" fill="#8b8b8b"/></svg>
  <svg style="left:567.5px;top:984.5px" width="16" height="15" viewBox="0 0 16 15"><path d="M8 14.4 L15.2 7 H11 V0.8 H5 V7 H0.8 Z" fill="#8b8b8b"/></svg>
  <svg style="left:755px;top:983.5px" width="16" height="17" viewBox="0 0 16 17"><path d="M5.6 2.6 V1.2 H10.4 V2.6 M1.2 3.4 H14.8 M2.8 3.6 V14.2 Q2.8 15.8 4.4 15.8 H11.6 Q13.2 15.8 13.2 14.2 V3.6 M5.8 6 V13.2 M8 6 V13.2 M10.2 6 V13.2" fill="none" stroke="#d4d4d4" stroke-width="1.5"/></svg>
  <div style="left:795.5px;top:442.5px;width:559px;height:566.5px;border:1px solid #444444;box-shadow:inset 1px 1px 0 rgba(255,255,255,0.06),1px 1px 0 rgba(255,255,255,0.06);"></div>
  <div style="left:808px;top:466px;width:533.5px;height:224.5px;border:1px solid #444444;box-shadow:inset 1px 1px 0 rgba(255,255,255,0.06),1px 1px 0 rgba(255,255,255,0.06);"></div>
  <div style="left:808px;top:705.5px;width:533.5px;height:106px;border:1px solid #444444;box-shadow:inset 1px 1px 0 rgba(255,255,255,0.06),1px 1px 0 rgba(255,255,255,0.06);"></div>
  <div style="left:814.5px;top:433.3px;width:96px;height:16px;background:#535353;"></div>
  <div class="t" style="left:820.5px;top:433.4px;">Vetett árnyék</div>
  <div style="left:827.5px;top:456.8px;width:74px;height:16px;background:#535353;"></div>
  <div class="t" style="left:833.5px;top:456.9px;">Szerkezet</div>
  <div style="left:827.5px;top:697px;width:64px;height:16px;background:#535353;"></div>
  <div class="t" style="left:833.5px;top:697.1px;">Minőség</div>
  <div class="t r" style="right:692px;top:492.6px;">Keverési mód:</div>
  <div style="left:916px;top:490.5px;width:206.5px;height:22px;background:#464646;border:1px solid #6a6a6a;border-radius:3px;"></div>
  <div class="t" style="left:925.5px;top:492.6px;">Többszörözés</div>
  <svg style="left:1108.5px;top:498.5px" width="10" height="8" viewBox="0 0 10 8"><path d="M1.4 1.6 L5 5.6 L8.6 1.6" fill="none" stroke="#e0e0e0" stroke-width="1.4"/></svg>
  <div style="left:1127.5px;top:486px;width:44.5px;height:31px;background:#000;border:1px solid #3a3a3a;"></div>
  <div class="t r" style="right:692px;top:525.6px;">Opacitás:</div>
  <div style="left:924px;top:527px;width:121.5px;height:3.4px;background:#6e6e6e;border-radius:1.5px;"></div>
  <svg style="left:957px;top:527.4px" width="18" height="18" viewBox="0 0 16 16"><path d="M8 1.2 L14.2 9.4 V11.4 Q14.2 14.6 11 14.6 H5 Q1.8 14.6 1.8 11.4 V9.4 Z" fill="#f1f1f1" stroke="#1e1e1e" stroke-width="1.3" stroke-linejoin="round"/></svg>
  <div style="left:1060.5px;top:523px;width:55.5px;height:21.5px;background:#454545;border:2px solid #2f63c8;border-radius:2px;"></div>
  <div style="left:1064.0px;top:526px;width:18.5px;height:15.5px;background:#3f78d8;"></div>
  <div class="t" style="left:1065.3px;top:525.6px;color:#fff;">35</div>
  <div class="t" style="left:1118px;top:525.6px;">%</div>
  <div class="t r" style="right:692px;top:564.9px;">Szög:</div>
  <svg style="left:913px;top:549px" width="50" height="50" viewBox="0 0 50 50"><circle cx="24.6" cy="24.4" r="22.9" fill="none" stroke="#b9b9b9" stroke-width="1.4"/><path d="M24.6 24.4 V5" stroke="#c4c4c4" stroke-width="1.4"/><circle cx="24.6" cy="24.6" r="2.4" fill="#b5b5b5"/></svg>
  <div style="left:966px;top:563px;width:58.5px;height:21px;background:#454545;border:1px solid #686868;border-radius:2px;"></div>
  <div class="t" style="left:971.5px;top:564.9px;">90</div>
  <div class="t" style="left:1027.5px;top:565.3px;">°</div>
  <svg style="left:1045px;top:567px" width="13" height="13" viewBox="0 0 13 13"><rect x="0" y="0" width="13" height="13" rx="2.5" fill="#dddddd"/><path d="M3 6.6 L5.5 9.3 L10.2 3.5" fill="none" stroke="#1c1c1c" stroke-width="2.1"/></svg>
  <div class="t" style="left:1068.5px;top:564.9px;">Globális fényforrás használata</div>
  <div class="t r" style="right:692px;top:604.6px;">Távolság:</div>
  <div style="left:924px;top:605.7px;width:121.5px;height:3.4px;background:#6e6e6e;border-radius:1.5px;"></div>
  <svg style="left:914.5px;top:606.6px" width="18" height="18" viewBox="0 0 16 16"><path d="M8 1.2 L14.2 9.4 V11.4 Q14.2 14.6 11 14.6 H5 Q1.8 14.6 1.8 11.4 V9.4 Z" fill="#f1f1f1" stroke="#1e1e1e" stroke-width="1.3" stroke-linejoin="round"/></svg>
  <div class="t r" style="right:692px;top:631.9px;">Terülés:</div>
  <div style="left:924px;top:633.0px;width:121.5px;height:3.4px;background:#6e6e6e;border-radius:1.5px;"></div>
  <svg style="left:912.8px;top:633.9px" width="18" height="18" viewBox="0 0 16 16"><path d="M8 1.2 L14.2 9.4 V11.4 Q14.2 14.6 11 14.6 H5 Q1.8 14.6 1.8 11.4 V9.4 Z" fill="#f1f1f1" stroke="#1e1e1e" stroke-width="1.3" stroke-linejoin="round"/></svg>
  <div class="t r" style="right:692px;top:659.1px;">Méret:</div>
  <div style="left:924px;top:660.2px;width:121.5px;height:3.4px;background:#6e6e6e;border-radius:1.5px;"></div>
  <svg style="left:916.6px;top:661.1px" width="18" height="18" viewBox="0 0 16 16"><path d="M8 1.2 L14.2 9.4 V11.4 Q14.2 14.6 11 14.6 H5 Q1.8 14.6 1.8 11.4 V9.4 Z" fill="#f1f1f1" stroke="#1e1e1e" stroke-width="1.3" stroke-linejoin="round"/></svg>
  <div style="left:1061px;top:602.8px;width:54.5px;height:20.8px;background:#454545;border:1px solid #686868;border-radius:2px;"></div>
  <div class="t" style="left:1066.5px;top:604.6px;">1</div>
  <div class="t" style="left:1118px;top:604.6px;">képpont</div>
  <div style="left:1061px;top:630px;width:54.5px;height:20.8px;background:#454545;border:1px solid #686868;border-radius:2px;"></div>
  <div class="t" style="left:1066.5px;top:631.9px;">0</div>
  <div class="t" style="left:1118px;top:631.9px;">%</div>
  <div style="left:1061px;top:657.2px;width:54.5px;height:20.8px;background:#454545;border:1px solid #686868;border-radius:2px;"></div>
  <div class="t" style="left:1066.5px;top:659.1px;">3</div>
  <div class="t" style="left:1118px;top:659.1px;">képpont</div>
  <div class="t r" style="right:692px;top:740.6px;">Kontúr:</div>
  <div style="left:916px;top:726px;width:59.5px;height:45px;background:#464646;border:1px solid #666;border-radius:2px;"></div>
  <svg style="left:917px;top:727px" width="43.5" height="43" viewBox="0 0 43.5 43"><rect width="43.5" height="43" fill="#474747"/><path d="M0 0 H43.5 L0 43 Z" fill="#ffffff"/></svg>
  <div style="left:960.5px;top:727px;width:1px;height:43px;background:#3e3e3e;"></div>
  <svg style="left:962.5px;top:745px" width="11" height="8" viewBox="0 0 11 8"><path d="M1.4 1.6 L5.5 5.8 L9.6 1.6" fill="none" stroke="#e4e4e4" stroke-width="1.6"/></svg>
  <div style="left:992.5px;top:743px;width:12.4px;height:12.4px;background:#474747;border:1.2px solid #7c7c7c;border-radius:2.6px;"></div>
  <div class="t" style="left:1015px;top:740.6px;">Élsimított</div>
  <div class="t r" style="right:692px;top:780.6px;">Zaj:</div>
  <div style="left:924px;top:781.8px;width:121.5px;height:3.4px;background:#6e6e6e;border-radius:1.5px;"></div>
  <svg style="left:913px;top:782.5px" width="18" height="18" viewBox="0 0 16 16"><path d="M8 1.2 L14.2 9.4 V11.4 Q14.2 14.6 11 14.6 H5 Q1.8 14.6 1.8 11.4 V9.4 Z" fill="#f1f1f1" stroke="#1e1e1e" stroke-width="1.3" stroke-linejoin="round"/></svg>
  <div style="left:1061px;top:778px;width:54.5px;height:20.8px;background:#454545;border:1px solid #686868;border-radius:2px;"></div>
  <div class="t" style="left:1066.5px;top:780.6px;">0</div>
  <div class="t" style="left:1118px;top:780.6px;">%</div>
  <svg style="left:919px;top:820px" width="13" height="13" viewBox="0 0 13 13"><rect x="0" y="0" width="13" height="13" rx="2.5" fill="#dddddd"/><path d="M3 6.6 L5.5 9.3 L10.2 3.5" fill="none" stroke="#1c1c1c" stroke-width="2.1"/></svg>
  <div class="t" style="left:942.5px;top:817.9px;">Réteg kiejtése az árnyéknál</div>
  <div style="left:888.7px;top:841px;width:172.5px;height:30.5px;background:#454545;border:1px solid #696969;border-radius:3px;text-align:center;"></div>
  <div style="left:1074.7px;top:841px;width:187.5px;height:30.5px;background:#454545;border:1px solid #696969;border-radius:3px;text-align:center;"></div>
  <div class="t" style="left:888.7px;top:847.9px;width:172.5px;text-align:center;">Legyen alapértelmezett</div>
  <div class="t" style="left:1074.7px;top:847.9px;width:187.5px;text-align:center;">Alapértékek visszaállítása</div>
  <div style="left:1376px;top:401px;width:168px;height:34px;border:2px solid #ebebeb;border-radius:17px;"></div>
  <div style="left:1376px;top:447px;width:168px;height:33.5px;border:1.4px solid #828282;border-radius:17px;"></div>
  <div style="left:1376px;top:492.3px;width:168px;height:33.5px;border:1.4px solid #828282;border-radius:17px;"></div>
  <div class="t" style="left:1376px;top:407.8px;width:168px;text-align:center;font-size:16px;line-height:20px;color:#ececec;letter-spacing:0.2px;">OK</div>
  <div class="t" style="left:1376px;top:453.3px;width:168px;text-align:center;font-size:16px;line-height:20px;color:#ececec;letter-spacing:0.2px;">Mégse</div>
  <div class="t" style="left:1376px;top:498.7px;width:168px;text-align:center;font-size:16px;line-height:20px;color:#ececec;letter-spacing:0.2px;">Új stílus...</div>
  <svg style="left:1404px;top:542px" width="16" height="16" viewBox="0 0 13 13"><rect x="0" y="0" width="13" height="13" rx="2.5" fill="#dddddd"/><path d="M3 6.6 L5.5 9.3 L10.2 3.5" fill="none" stroke="#1c1c1c" stroke-width="2.1"/></svg>
  <div class="t" style="left:1433px;top:539.8px;font-size:16px;line-height:20px;color:#ececec;letter-spacing:0.1px;">Előnézet</div>
  <div style="left:1375.7px;top:572.7px;width:168.5px;height:167.8px;background:#2b2b2b;border:1px solid #383838;"></div>
  <div style="left:1417.8px;top:614.8px;width:83.5px;height:83.5px;background:#5b5b5b;"></div>
  <!--/DIALOG-->
  <div id="leftedge"></div>
  <div id="botedge"></div>
  <div style="left:258px;top:1031px;width:958px;height:2px;background:#f6e1d9;"></div>
</div>
</body>
</html>
